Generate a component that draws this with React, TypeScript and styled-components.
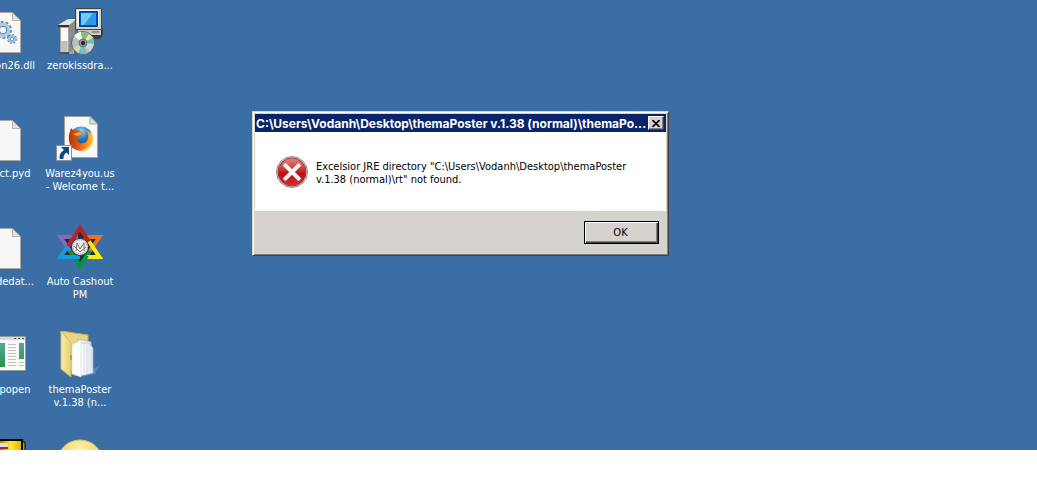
import React from "react";
import styled, { createGlobalStyle } from "styled-components";

const GlobalStyle = createGlobalStyle`
  *, *::before, *::after { box-sizing: border-box; }
  body {
    margin: 0;
    background: #fff;
    font-family: "DejaVu Sans Condensed", "DejaVu Sans", Tahoma, sans-serif;
    font-size: 11px;
    line-height: 13px;
  }
`;

const Desktop = styled.main`
  position: relative;
  height: calc(100vh - 30px);
  overflow: hidden;
  background: #3a6ea5;
`;

const IconGrid = styled.div`
  display: grid;
  grid-template-columns: 30px 76px;
  grid-auto-rows: 108px;
  column-gap: 12px;
  padding-top: 7px;
`;

const Shortcut = styled.div<{ $cut?: boolean }>`
  display: flex;
  flex-direction: column;
  align-items: center;
  gap: 4px;
  color: #fff;
  text-align: center;
  white-space: pre;

  svg {
    display: block;
    flex: none;
    align-self: ${(p) => (p.$cut ? "flex-start" : "center")};
  }
`;

const Dialog = styled.section`
  position: absolute;
  top: 111px;
  left: 252px;
  width: 417px;
  padding: 2px;
  background: #d6d3ce;
  border: 1px solid;
  border-color: #d6d3ce #404040 #404040 #d6d3ce;
  box-shadow: inset 1px 1px #fff, inset -1px -1px #808080;
`;

const TitleBar = styled.header`
  display: flex;
  align-items: center;
  justify-content: space-between;
  height: 18px;
  padding: 0 2px 0 1px;
  background: #0a246a;
  color: #fff;
`;

const Title = styled.h1`
  margin: 0;
  font-family: Inter, "DejaVu Sans Condensed", sans-serif;
  font-size: 12px;
  font-weight: bold;
  white-space: nowrap;
`;

const RaisedButton = styled.button`
  display: flex;
  align-items: center;
  justify-content: center;
  padding: 0;
  background: #d6d3ce;
  border: 1px solid;
  border-color: #fff #404040 #404040 #fff;
  border-radius: 0;
  box-shadow: inset -1px -1px #808080;
  color: #000;
  font: inherit;
`;

const CloseButton = styled(RaisedButton)`
  flex: none;
  width: 16px;
  height: 14px;
`;

const OkButton = styled(RaisedButton)`
  width: 75px;
  height: 23px;
  padding-right: 2px;
  border-color: #000;
  box-shadow: inset 1px 1px #fff, inset -1px -1px #404040, inset -2px -2px #808080;
`;

const Message = styled.div`
  display: flex;
  gap: 8px;
  min-height: 79px;
  padding: 24px 21px 23px;
  background: #fff;

  svg { flex: none; }
`;

const MessageText = styled.p`
  margin: 0;
  padding-top: 4px;
  color: #000;
  white-space: pre;
`;

const Footer = styled.footer`
  display: flex;
  justify-content: flex-end;
  padding: 10px 7px 9px;
`;

/* Dog-eared sheet whose right half is on screen */
const Sheet = ({ children }: { children?: React.ReactNode }) => (
  <svg width="24" height="48" viewBox="0 0 24 48" aria-hidden="true">
    <path d="M-2 5.5H12.500L20.500 13.500V45.500H-2Z" fill="#f9f7f5" stroke="#aaa7a5" />
    <path d="M12.500 5.500V13.500H20.500Z" fill="#dce2e6" stroke="#a5a5a5" strokeWidth=".8" />
    {children}
  </svg>
);

const GearSheet = () => (
  <Sheet>
    <g fill="none" stroke="#587f9f">
      <circle cx="3" cy="23" r="7.500" strokeWidth="3" strokeDasharray="2.700 2" />
      <circle cx="3" cy="23" r="5.800" stroke="#a9cde6" strokeWidth="3.500" />
      <circle cx="3" cy="23" r="3.800" strokeWidth="1" />
      <circle cx="12" cy="32" r="4" strokeWidth="2" strokeDasharray="1.700 1.400" />
      <circle cx="12" cy="32" r="3" stroke="#9bc3df" strokeWidth="2" />
      <circle cx="12" cy="32" r="1.700" strokeWidth=".8" />
    </g>
  </Sheet>
);

const Installer = () => (
  <svg width="48" height="48" viewBox="0 0 48 48" aria-hidden="true">
    <path d="M3 19L12 13H20L18 18V47H4V20Z" fill="#a5a5a3" />
    <path d="M2 18L12 12H20L13 18Z" fill="#e3e3df" />
    <path d="M2 18H13V20H2Z" fill="#343434" />
    <path d="M5 21H12V46H5Z" fill="#fafaf7" />
    <path d="M5 34H12V46H5Z" fill="#d0d0ce" />
    <path d="M13 19L19 14V41L13 46Z" fill="#8b8b89" />
    <path d="M4 46H13" stroke="#333" strokeWidth="1.500" />
    <path d="M6 34V45M8 34V45M10 34V45" stroke="#a6a6a6" strokeWidth=".7" />
    <path d="M26 22L47 21V28L44 32H30Z" fill="#3d3d3b" />
    <path d="M22 22H45V28H22Z" fill="#c9c8c3" />
    <path d="M36 25H43" stroke="#555" />
    <path d="M19.500 1.500H45.500V22.500H19.500Z" fill="#d2d2cd" stroke="#444" />
    <path d="M21 3H43V20H21Z" fill="#f3f3ee" />
    <path d="M23.500 4.500H41.500V19.500H23.500Z" fill="#0753bd" stroke="#063b80" />
    <path d="M25 6H40V18H25Z" fill="#319ae5" />
    <path d="M25 18V6H37L28 18Z" fill="#84e1ff" opacity=".7" />
    <circle cx="27" cy="36" r="11.500" fill="#b9c0be" stroke="#555e60" />
    <path d="M27 36L18 29Q21 25 25 25Z" fill="#f9f9ef" />
    <path d="M27 36L25 25Q30 24 33 27Z" fill="#8fb78b" />
    <path d="M27 36L33 27L37 31Z" fill="#eee890" />
    <path d="M27 36L37 31L38 37Z" fill="#62c4be" />
    <path d="M27 36L38 37L34 45Z" fill="#c9d7de" />
    <path d="M27 36L31 47L22 46Z" fill="#6fc2cb" />
    <path d="M27 36L22 46L17 41Z" fill="#d9d9a4" />
    <circle cx="27" cy="36" r="4" fill="#9c9d97" stroke="#555" strokeWidth=".7" />
    <circle cx="27" cy="36" r="2.200" fill="#152f4b" />
  </svg>
);

const FirefoxLink = () => (
  <svg width="48" height="48" viewBox="0 0 48 48" aria-hidden="true">
    <defs>
      <radialGradient id="globe" cx=".5" cy=".2" r=".8">
        <stop stopColor="#8bd6fb" /><stop offset=".45" stopColor="#2776bd" /><stop offset="1" stopColor="#102d69" />
      </radialGradient>
      <linearGradient id="fox" x1="0" x2="1">
        <stop stopColor="#b83009" /><stop offset=".55" stopColor="#ed6d15" /><stop offset="1" stopColor="#ffc13b" />
      </linearGradient>
    </defs>
    <path d="M8.500 1.500H34L41.500 9V42.500H8.500Z" fill="#faf8f7" stroke="#a19e9c" />
    <path d="M34 1.500V9H41.500Z" fill="#d8e0e6" stroke="#949494" strokeWidth=".8" />
    <circle cx="25" cy="23" r="11.500" fill="url(#globe)" />
    <path d="M14 16L15 13L18 16Q21 14 24 16L27 18L25 21L21 22Q20 26 24 28Q28 29 31 26Q34 21 30 15Q37 17 37 25Q36 36 25 36Q14 35 13 26Q12 21 14 16Z" fill="url(#fox)" />
    <path d="M34 16Q38 23 35 29Q31 35 23 35Q32 37 36 30Q40 23 34 16Z" fill="#ffe06a" />
    <path d="M17 19L24 17L26 19L21 21Z" fill="#f6a548" />
    <path d="M.5 30.500H15.500V45.500H.500Z" fill="#f5f8fc" stroke="#8d9298" />
    <path d="M5 32H13V40L10.500 37.500Q7 40 7.500 44H4Q2 39 8 35Z" fill="#144582" />
  </svg>
);

const Star = () => (
  <svg width="48" height="48" viewBox="0 0 48 48" aria-hidden="true">
    <path d="M24 5L43.500 34H4.500ZM24 43L4.500 14H43.500Z" fill="#292c35" />
    <g fill="none" strokeWidth="4">
      <path d="M14 28L24 43L34 28" stroke="#079447" />
      <path d="M22 14H4.500L14 28" stroke="#8b68ba" />
      <path d="M28 14H43.500L34 28" stroke="#ee7223" />
      <path d="M14 20L4.500 34H24" stroke="#159cdc" />
      <path d="M32 17L43.500 34H30" stroke="#f5ed13" />
      <path d="M12 23L24 5L33 18.500" stroke="#bd2028" />
      <path d="M24 43L31 32.500" stroke="#079447" />
    </g>
    <circle cx="24" cy="24" r="8.500" fill="#eceded" stroke="#333" />
    <circle cx="24" cy="24" r="7" fill="none" stroke="#999" strokeDasharray="1 1" />
    <path d="M20 28L21 20L24 26L28 20L28 28M18 23L24 29L30 24" fill="none" stroke="#777" />
  </svg>
);

const AppWindow = () => (
  <svg width="26" height="48" viewBox="0 0 26 48" aria-hidden="true">
    <defs>
      <linearGradient id="pane" x2="0" y2="1"><stop stopColor="#58a5a0" /><stop offset="1" stopColor="#2b9249" /></linearGradient>
    </defs>
    <path d="M-1 5.500H25.500V39.500H-1Z" fill="#faf9f6" stroke="#909b9e" />
    <path d="M0 6H25V9H0Z" fill="#d3dce1" />
    <path d="M14 7.500H16M18 7.500H20M22 7.500H24" stroke="#404e5a" />
    <path d="M0 12H5V36H0ZM19 12H24V28H19Z" fill="url(#pane)" />
    <path d="M8 13.500H16M8 16.500H16M8 19.500H16M8 22.500H16M8 25.500H16M8 28.500H16M8 31.500H16M8 34.500H16M19 31.500H24M19 34.500H24" stroke="#c1c1bd" />
  </svg>
);

const Folder = () => (
  <svg width="48" height="48" viewBox="0 0 48 48" aria-hidden="true">
    <defs>
      <linearGradient id="folder"><stop stopColor="#f9eca5" /><stop offset="1" stopColor="#e6cf74" /></linearGradient>
      <linearGradient id="paper"><stop stopColor="#fff" /><stop offset="1" stopColor="#dce3ed" /></linearGradient>
    </defs>
    <path d="M34 40L44 34L39 43L25 46Z" fill="#799abd" opacity=".5" />
    <path d="M5 0L32 4V40H11Z" fill="#ead67f" stroke="#c8ae57" />
    <path d="M22 8L35 11V42L22 40Z" fill="#f4f5f7" stroke="#bbb" />
    <path d="M24 12H33L37 17V42L24 45Z" fill="url(#paper)" stroke="#aeb9c7" strokeWidth=".7" />
    <path d="M28 12V42M31 14V42" stroke="#cbd3dd" strokeWidth=".6" />
    <path d="M16 14L25 9V46L16 43Z" fill="#fdfdfd" stroke="#d6d6d6" strokeWidth=".6" />
    <path d="M5 0L15 12V46L5 38Z" fill="url(#folder)" stroke="#d1b960" />
    <path d="M15 24V29" stroke="#947b33" />
  </svg>
);

const YellowBox = () => (
  <svg width="26" height="48" viewBox="0 0 26 48" aria-hidden="true">
    <defs>
      <linearGradient id="gold"><stop stopColor="#a96a13" /><stop offset=".5" stopColor="#ffee2b" /><stop offset="1" stopColor="#e4ad00" /></linearGradient>
    </defs>
    <path d="M21 3H25V20H21Z" fill="#c79b16" stroke="#000" />
    <path d="M-1 1H22V20H-1Z" fill="url(#gold)" stroke="#000" strokeWidth="2" />
    <path d="M0 4H8V8H0Z" fill="#ddd" />
    <path d="M0 8H8V10H0Z" fill="#a62a16" />
  </svg>
);

const Ball = () => (
  <svg width="48" height="48" viewBox="0 0 48 48" aria-hidden="true">
    <defs>
      <radialGradient id="ball" cx=".5" cy=".2" r=".6"><stop stopColor="#fff2ad" /><stop offset="1" stopColor="#f4c34e" /></radialGradient>
    </defs>
    <circle cx="24" cy="24" r="23" fill="url(#ball)" stroke="#dec16b" />
  </svg>
);

const ErrorIcon = () => (
  <svg width="32" height="32" viewBox="0 0 32 32" aria-hidden="true">
    <defs>
      <linearGradient id="error" x2="0" y2="1">
        <stop stopColor="#e08782" /><stop offset=".45" stopColor="#cb2c2e" /><stop offset=".55" stopColor="#bd0d12" /><stop offset="1" stopColor="#cf332e" />
      </linearGradient>
    </defs>
    <circle cx="16" cy="16" r="15.500" fill="#e5e5e5" stroke="#898989" />
    <circle cx="16" cy="16" r="14" fill="url(#error)" stroke="#a83032" />
    <path d="M9.500 9.500L22.500 22.500M22.500 9.500L9.500 22.500" stroke="#f5f5f5" strokeWidth="4" strokeLinecap="square" />
  </svg>
);

const shortcuts = [
  { icon: <GearSheet />, label: "on26.dll", cut: true },
  { icon: <Installer />, label: "zerokissdra..." },
  { icon: <Sheet />, label: "ct.pyd", cut: true },
  { icon: <FirefoxLink />, label: "Warez4you.us\n- Welcome t..." },
  { icon: <Sheet />, label: "dedat...", cut: true },
  { icon: <Star />, label: "Auto Cashout\nPM" },
  { icon: <AppWindow />, label: "popen", cut: true },
  { icon: <Folder />, label: "themaPoster\nv.1.38 (n..." },
  { icon: <YellowBox />, label: "", cut: true },
  { icon: <Ball />, label: "" },
];

export default function App() {
  return (
    <>
      <GlobalStyle />
      <Desktop>
        <IconGrid>
          {shortcuts.map((item, i) => (
            <Shortcut key={i} $cut={item.cut}>
              {item.icon}
              {item.label && <span>{item.label}</span>}
            </Shortcut>
          ))}
        </IconGrid>
        <Dialog role="alertdialog" aria-labelledby="dialog-title" aria-describedby="dialog-text">
          <TitleBar>
            <Title id="dialog-title">{"C:\\Users\\Vodanh\\Desktop\\themaPoster v.1.38 (normal)\\themaPo..."}</Title>
            <CloseButton type="button" aria-label="Close">
              <svg width="8" height="7" viewBox="0 0 8 7" aria-hidden="true">
                <path d="M.5 0L7.500 7M7.500 0L.5 7" stroke="#000" strokeWidth="1.700" />
              </svg>
            </CloseButton>
          </TitleBar>
          <Message>
            <ErrorIcon />
            <MessageText id="dialog-text">
              {'Excelsior JRE directory "C:\\Users\\Vodanh\\Desktop\\themaPoster\nv.1.38 (normal)\\rt" not found.'}
            </MessageText>
          </Message>
          <Footer>
            <OkButton type="button">OK</OkButton>
          </Footer>
        </Dialog>
      </Desktop>
    </>
  );
}
